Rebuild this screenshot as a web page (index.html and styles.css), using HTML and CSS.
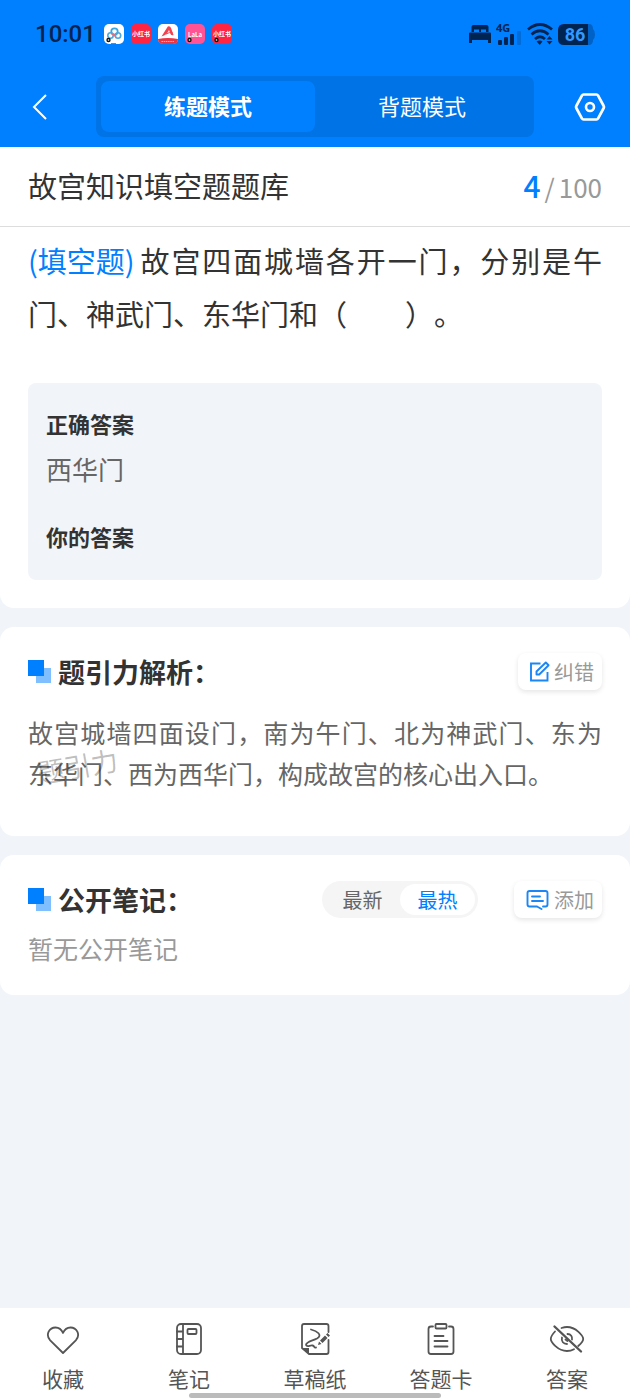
FILE: index.html
```html
<!DOCTYPE html>
<html lang="zh-CN">
<head>
<meta charset="utf-8">
<meta name="viewport" content="width=device-width, initial-scale=1">
<title>故宫知识填空题题库</title>
<link rel="stylesheet" href="styles.css">
</head>
<body>
<header class="header">
  <div class="status">
    <span class="clock">10:01</span>
    <div class="apps">
      <svg class="app" viewBox="0 0 20 20" aria-hidden="true"><rect width="20" height="20" rx="5" fill="#fff"/><circle cx="10.500" cy="7.500" r="3.200" fill="none" stroke="#3aa5dc" stroke-width="1.800"/><circle cx="6.500" cy="11.500" r="2.700" fill="none" stroke="#4aa9de" stroke-width="1.600"/><circle cx="14" cy="11.500" r="2.700" fill="none" stroke="#4aa9de" stroke-width="1.600"/><path d="M8 9.500l4 3" stroke="#ee6c78" stroke-width="1.800"/><path d="M7 19.500h5" stroke="#f0506a"/><circle cx="4.500" cy="16" r="2.200" fill="#111"/><circle cx="4.500" cy="16" r=".8" fill="#fff"/></svg>
      <svg class="app" viewBox="0 0 20 20" aria-hidden="true"><rect width="20" height="20" rx="5" fill="#ff2442"/><text x="10" y="12.300" class="app-text">小红书</text></svg>
      <svg class="app" viewBox="0 0 20 20" aria-hidden="true"><rect width="20" height="20" rx="5" fill="#fff"/><path d="M3.500 12.500L9.800 2.500Q12 1.500 13 4l2.500 7q-2 .8-3-1l-1.500-4q-2 5-7.500 6.500z" fill="#f3424f"/><path d="M8 10q3.500-2 6.500-1.500" stroke="#f3424f" fill="none"/><path d="M0 15q10-2 20 0q0 5-5 5H5q-5 0-5-5z" fill="#e93645"/><path d="M3.500 17.500h13" stroke="#f8adb2" stroke-dasharray="1.500 .7"/></svg>
      <svg class="app" viewBox="0 0 20 20" aria-hidden="true"><rect width="20" height="20" rx="5" fill="#ff5395"/><text x="10" y="12.500" class="app-text">LaLa</text><circle cx="4.500" cy="16" r="2.200" fill="#111"/><circle cx="4.500" cy="16" r=".8" fill="#fff"/></svg>
      <svg class="app" viewBox="0 0 20 20" aria-hidden="true"><rect width="20" height="20" rx="5" fill="#ff2442"/><text x="10" y="12.300" class="app-text">小红书</text><circle cx="4.500" cy="16" r="2.200" fill="#111"/><circle cx="4.500" cy="16" r=".8" fill="#fff"/></svg>
    </div>
    <div class="signals">
      <svg width="22" height="20" viewBox="0 0 22 20" aria-hidden="true"><path d="M2.500 8V3q0-2 2-2h13q2 0 2 2v5h-2.500V5.500H12V8h-2V5.500H5V8zM0 9.500q0-1 1-1h20q1 0 1 1V19h-3v-3H3v3H0z" fill="#002452"/></svg>
      <svg width="26" height="26" viewBox="0 -4 26 26" aria-hidden="true"><text x="0" y="7" class="net">4G</text><rect x="2" y="15" width="4" height="5" rx="1" fill="#002452"/><rect x="8" y="12" width="4" height="8" rx="1" fill="#002452"/><rect x="14" y="9" width="4" height="11" rx="1" fill="#002452"/><rect x="21" y="6" width="4" height="14" rx="1" fill="#006cd9"/></svg>
      <svg width="26" height="22" viewBox="0 0 26 22" aria-hidden="true"><g fill="none" stroke="#002452" stroke-width="2.800"><path d="M1 6.500Q13-3.500 25 6.500"/><path d="M4.500 11.500Q13 4 21.500 11.500"/><path d="M8 16Q13 11.500 18 16"/></g><path d="M9.500 18.500q3.500-2 6 0L12.800 22z" fill="#002452"/><path d="M22.500 13l3 3.600h-6zM19.500 18h6l-3 3.600z" fill="#002452"/></svg>
      <svg width="37" height="21" viewBox="0 0 37 21" aria-label="电量 86"><path d="M30 0h1q4 0 4 5 2 1.500 2 5.500t-2 5.500q0 5-4 5h-1z" fill="#0062c6"/><path d="M6 0h24v21H6q-6 0-6-6V6q0-6 6-6z" fill="#002452"/><text x="17" y="17" class="battery">86</text></svg>
    </div>
  </div>
  <div class="topbar">
    <button class="icon-button" aria-label="返回"><svg width="16" height="28" viewBox="0 0 16 28"><path d="M14 2L2 14l12 12" fill="none" stroke="#fff" stroke-width="2"/></svg></button>
    <div class="modes">
      <button class="mode mode-active" aria-pressed="true">练题模式</button>
      <button class="mode" aria-pressed="false">背题模式</button>
    </div>
    <button class="icon-button" aria-label="设置"><svg width="32" height="28" viewBox="0 0 32 28"><path d="M9.500 1.500h13q1 0 1.500 1l5.700 10.500q.6 1 0 2L24 25.500q-.5 1-1.500 1h-13q-1 0-1.500-1L2.300 15q-.6-1 0-2L8 2.500q.5-1 1.500-1z" fill="none" stroke="#fff" stroke-width="2.700"/><circle cx="16" cy="14" r="4" fill="none" stroke="#fff" stroke-width="2.600"/></svg></button>
  </div>
</header>

<main class="content">
  <section class="card question-card">
    <div class="title-row">
      <h1 class="title">故宫知识填空题题库</h1>
      <div class="progress"><span class="current">4</span><span class="slash">/</span>100</div>
    </div>
    <div class="question-body">
      <p class="question"><span class="type">(填空题)</span>故宫四面城墙各开一门，分别是午门、神武门、东华门和（&#x3000;&#x3000;）。</p>
      <div class="answers">
        <h2 class="answer-label">正确答案</h2>
        <p class="answer">西华门</p>
        <h2 class="answer-label">你的答案</h2>
      </div>
    </div>
  </section>

  <section class="card analysis">
    <div class="card-head">
      <svg class="mark" viewBox="0 0 23 23" aria-hidden="true"><rect x="8" y="8" width="15" height="15" fill="#80bfff"/><rect width="16" height="16" fill="#0080ff"/></svg>
      <h2 class="heading">题引力解析：</h2>
      <button class="chip"><svg width="21" height="21" viewBox="0 0 21 21" aria-hidden="true"><g fill="none" stroke="#1b86f5" stroke-width="1.900"><path d="M11.500 2.500H2v17h16.500V11"/><path d="M7.500 13.500v-3L16.800 1.500l2.800 2.700-9.400 9.300z" stroke-linejoin="round"/></g></svg>纠错</button>
    </div>
    <div class="analysis-body">
      <p class="analysis-text">故宫城墙四面设门，南为午门、北为神武门、东为东华门、西为西华门，构成故宫的核心出入口。</p>
      <span class="watermark" aria-hidden="true">题引力</span>
    </div>
  </section>

  <section class="card notes">
    <div class="card-head">
      <svg class="mark" viewBox="0 0 23 23" aria-hidden="true"><rect x="8" y="8" width="15" height="15" fill="#80bfff"/><rect width="16" height="16" fill="#0080ff"/></svg>
      <h2 class="heading">公开笔记：</h2>
      <div class="sort">
        <button class="sort-item" aria-pressed="false">最新</button>
        <button class="sort-item sort-active" aria-pressed="true">最热</button>
      </div>
      <button class="chip"><svg width="25" height="20" viewBox="-1 0 25 20" aria-hidden="true"><g fill="none" stroke="#1b86f5" stroke-width="1.900" stroke-linejoin="round" stroke-linecap="round"><path d="M11 16.500H3.500q-2 0-2-2V3q0-2 2-2h16q2 0 2 2v11.500q0 2-2 2H17M11 16.500l4.500 2.500"/><path d="M6 6.500h8M6 11h11"/></g></svg>添加</button>
    </div>
    <p class="empty">暂无公开笔记</p>
  </section>
</main>

<nav class="tabbar">
  <button class="tab"><svg width="34" height="34" viewBox="0 0 34 34" aria-hidden="true"><path d="M17 31L4.200 18.300C-1 12.500 3.500 5.500 9.500 5.500c3.500 0 6 2 7.500 5.500 1.500-3.500 4-5.500 7.500-5.500 6 0 10.500 7 5.300 12.800z" class="line"/></svg>收藏</button>
  <button class="tab"><svg width="34" height="34" viewBox="0 0 34 34" aria-hidden="true"><g class="line"><rect x="5" y="2" width="24" height="30" rx="4"/><path d="M11 2v30M5 9.500h6M5 17h6M5 24.500h6"/><rect x="15.500" y="7" width="9" height="5" rx="1"/></g></svg>笔记</button>
  <button class="tab"><svg width="34" height="34" viewBox="0 0 34 34" aria-hidden="true"><g class="line"><path d="M30.500 10V4q0-2-2-2H6Q4 2 4 4v22l7 6h17.500q2 0 2-2V18"/><path d="M13 7.500c6 1.500 12 5.500 6 9-5 2.500-11 3.500-11 6.500 1 2.500 4 0 6.500.5s1 2.500 3.500 2"/></g><path d="M4 26h7v6zM22 18.500l5-5 2.500 2.500-5 5zM28 12.500l1.500-1.500 2.500 2.500-1.500 1.500zM21 19.500l2.500 2.500-3.500 1z" fill="#555"/></svg>草稿纸</button>
  <button class="tab"><svg width="34" height="34" viewBox="0 0 34 34" aria-hidden="true"><g class="line"><path d="M9 4.500H7q-2.500 0-2.500 2.500v22.500Q4.500 32 7 32h20q2.500 0 2.500-2.500V7q0-2.500-2.500-2.500h-2"/><rect x="11.500" y="2" width="11" height="4.500" rx="1"/><path d="M10.500 14h9M10.500 19h13M10.500 24.500h13"/></g></svg>答题卡</button>
  <button class="tab"><svg width="36" height="34" viewBox="0 0 36 34" aria-hidden="true"><g class="line"><path d="M6 9.500Q1.800 14 1.800 17c0 3 7 12 16.200 12 3 0 5-.7 7-1.800M12.500 6q3-1 5.500-1c9 0 16.200 9 16.200 12 0 2-2 4.500-5 7"/><path d="M13 15.500c-1 4 1.500 6.500 5 6.500M18.500 12c3.500 0 5 3 4.500 5.500M16.500 17.500l2 1.500"/><path d="M5.500 4.500L32 29.500" stroke-width="2.400"/></g></svg>答案</button>
  <span class="home-indicator"></span>
</nav>
</body>
</html>
```
FILE: styles.css
```css
* {
  box-sizing: border-box;
}

body {
  margin: 0;
  min-height: 100vh;
  display: flex;
  flex-direction: column;
  background: #f1f5f9;
  color: #333;
  font-family: "Noto Sans CJK SC", sans-serif;
  text-spacing-trim: space-all;
}

h1,
h2,
p {
  margin: 0;
}

button {
  padding: 0;
  border: 0;
  background: none;
  color: inherit;
  font-family: inherit;
  cursor: pointer;
}

svg {
  display: block;
  flex: none;
}

/* Header */

.header {
  background: #0080ff;
  color: #fff;
}

.status {
  display: flex;
  align-items: center;
  height: 68px;
  padding: 0 35px;
}

.clock {
  color: #002452;
  font: 500 24px/28px Roboto, sans-serif;
}

.apps {
  display: flex;
  gap: 7px;
  margin-left: 8px;
}

.app {
  width: 20px;
  height: 20px;
}

.app-text {
  fill: #fff;
  font-size: 6px;
  font-weight: 700;
  text-anchor: middle;
}

.signals {
  display: flex;
  align-items: center;
  gap: 5px;
  margin-left: auto;
}

.net {
  fill: #002452;
  font: 700 11px "Noto Sans", sans-serif;
}

.battery {
  fill: #3399ff;
  font: 700 18px Roboto, sans-serif;
  text-anchor: middle;
}

.topbar {
  display: flex;
  align-items: center;
  justify-content: space-between;
  padding: 8px 24px 10px;
}

.icon-button {
  display: flex;
  justify-content: center;
  width: 32px;
}

.modes {
  display: grid;
  grid-template-columns: 1fr 1fr;
  flex: 1;
  margin: 0 40px;
  padding: 5px;
  border-radius: 8px;
  background: #0073e6;
}

.mode {
  height: 51px;
  padding-bottom: 4px;
  border-radius: 8px;
  font-size: 22px;
}

.mode-active {
  background: #0080ff;
  font-weight: 700;
}

/* Cards */

.content {
  display: flex;
  flex: 1;
  flex-direction: column;
  gap: 19px;
}

.card {
  border-radius: 14px;
  background: #fff;
}

.question-card {
  border-radius: 0 0 14px 14px;
}

.title-row {
  display: flex;
  align-items: center;
  justify-content: space-between;
  height: 80px;
  padding: 0 28px 4px;
  border-bottom: 1px solid #ddd;
}

.title {
  font-size: 29px;
  font-weight: 400;
}

.progress {
  color: #999;
  font-size: 26px;
}

.current {
  color: #0080ff;
  font-size: 30px;
  font-weight: 500;
}

.slash {
  margin: 0 4px;
}

.question-body {
  padding: 7px 28px 28px;
}

.question {
  font-size: 29px;
  line-height: 53px;
  text-align: justify;
}

.type {
  display: inline-block;
  margin-right: 4px;
  color: #0080ff;
}

.answers {
  margin-top: 43px;
  padding: 25px 18px 29px;
  border-radius: 8px;
  background: #f1f5f9;
}

.answer-label {
  font-size: 22px;
  font-weight: 700;
  line-height: 30px;
}

.answer {
  margin: 11px 0 32px;
  color: #666;
  font-size: 26px;
  line-height: 40px;
}

.card-head {
  display: flex;
  align-items: center;
}

.mark {
  width: 23px;
  height: 23px;
  margin-right: 7px;
}

.heading {
  font-size: 27px;
  font-weight: 700;
  line-height: 37px;
}

.chip {
  display: flex;
  align-items: center;
  gap: 4px;
  height: 37px;
  margin-left: auto;
  padding: 0 8px 0 11px;
  border-radius: 8px;
  box-shadow: 0 2px 5px rgba(0, 0, 0, 0.1);
  color: #999;
  font-size: 20px;
}

.analysis {
  padding: 26px 28px 42px;
}

.analysis-body {
  position: relative;
  margin-top: 22px;
}

.analysis-text {
  color: #666;
  font-size: 25px;
  line-height: 41px;
  text-align: justify;
}

.watermark {
  position: absolute;
  top: 34px;
  left: 9px;
  color: rgba(0, 0, 0, 0.26);
  font-size: 27px;
  line-height: 40px;
  transform: rotate(-10deg);
}

.notes {
  padding: 26px 28px;
}

.sort {
  display: flex;
  margin-left: auto;
  padding: 3px;
  border-radius: 19px;
  background: #f5f5f5;
}

.sort-item {
  width: 75px;
  height: 31px;
  border-radius: 16px;
  color: #666;
  font-size: 20px;
  line-height: 31px;
}

.sort-active {
  background: #fff;
  color: #0080ff;
}

.sort + .chip {
  margin-left: 36px;
}

.empty {
  margin-top: 10px;
  color: #999;
  font-size: 25px;
  line-height: 41px;
}

/* Bottom navigation */

.tabbar {
  position: relative;
  display: grid;
  grid-template-columns: repeat(5, 1fr);
  padding: 14px 0 7px;
  background: #fff;
}

.tab {
  display: flex;
  flex-direction: column;
  align-items: center;
  gap: 7px;
  color: #555;
  font-size: 21px;
  line-height: 30px;
}

.line {
  fill: none;
  stroke: #555;
  stroke-width: 1.8;
  stroke-linecap: round;
  stroke-linejoin: round;
}

.home-indicator {
  position: absolute;
  bottom: 2px;
  left: 30%;
  width: 40%;
  height: 5px;
  border-radius: 3px;
  background: #bbb;
}
```
